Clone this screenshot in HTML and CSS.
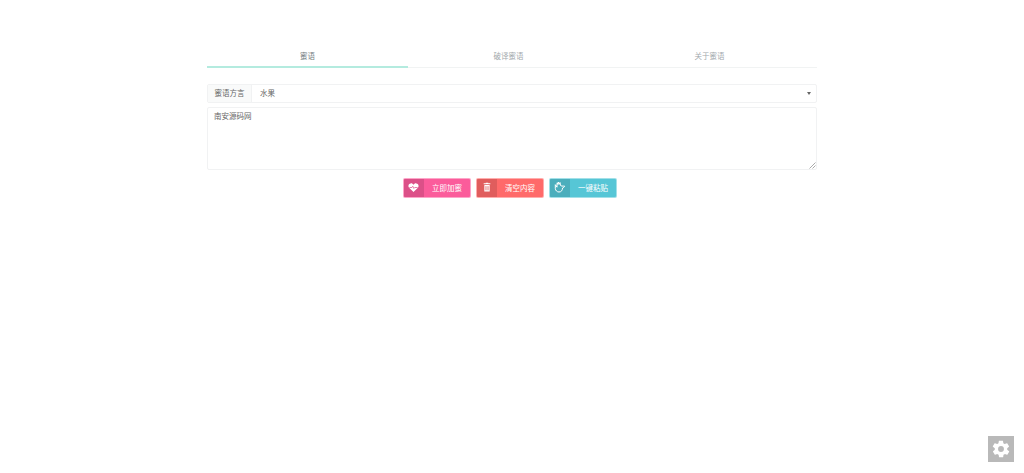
FILE: index.html
```html
<!DOCTYPE html>
<html lang="zh-CN">
<head>
<meta charset="utf-8">
<title>蜜语</title>
<link rel="stylesheet" href="styles.css">
</head>
<body>
<main class="wrap">
  <nav class="tabs">
    <a class="tab active">蜜语</a>
    <a class="tab">破译蜜语</a>
    <a class="tab">关于蜜语</a>
  </nav>
  <div class="group">
    <span class="addon">蜜语方言</span>
    <div class="select"><span>水果</span><i class="caret"></i></div>
  </div>
  <div class="textarea">南安源码网
    <svg class="grip" viewBox="0 0 7 7" width="7" height="7"><path d="M0.500 6.500 6.500 0.500M3.500 6.500 6.500 3.500" stroke="#aaa" stroke-width="1" fill="none"/></svg>
  </div>
  <div class="actions">
    <a class="btn pink"><span class="ico"><svg viewBox="0 0 12 12" width="11" height="11"><path d="M6 11 1.200 6.200C-.2 4.600.5 1.600 3 1.500 4.400 1.400 5.400 2.200 6 3c.6-.8 1.600-1.600 3-1.500 2.500.1 3.200 3.100 1.800 4.700Z" fill="#fff"/><path d="M1.500 6H4.300L5.200 4.600 6.400 7 7.300 6H10.500" stroke="#e0568e" stroke-width=".8" fill="none"/></svg></span><span class="lbl">立即加蜜</span></a>
    <a class="btn red"><span class="ico"><svg viewBox="0 0 12 12" width="10" height="10"><path d="M4.500 1.500V.8H7.500V1.500H10V2.800H2V1.500ZM2.800 3.500H9.200V11.300H2.800Z" fill="#fff"/><path d="M4.500 5V10M6 5V10M7.500 5V10" stroke="#de5f5f" stroke-width=".7"/></svg></span><span class="lbl">清空内容</span></a>
    <a class="btn cyan"><span class="ico"><svg viewBox="0 0 12 12" width="12" height="12"><path d="M1.300 3.700 3 6.200V3L3.200 1.800 4 3.500 4.300 1 5.300 3.300 6 1.500 6.500 4.500C7 5 8.700 5.300 10.500 5 10.800 6 9.500 6.700 8.500 7 8.500 9 7.500 11 5 11 3 11 1.500 9.500 1.300 7.500Z" fill="none" stroke="#fff" stroke-width="1" stroke-linejoin="round"/></svg></span><span class="lbl">一键粘贴</span></a>
  </div>
</main>
<button class="gear" type="button" aria-label="设置"><svg viewBox="0 0 24 24" width="20" height="20"><path fill="#fff" d="M19.400 13c.1-.3.100-.7.100-1s0-.7-.1-1l2.100-1.600c.2-.2.200-.4.100-.6l-2-3.500c-.1-.2-.4-.3-.6-.2l-2.500 1c-.5-.4-1.100-.7-1.700-1l-.4-2.600c0-.3-.2-.5-.5-.5h-4c-.3 0-.5.200-.5.500l-.4 2.600c-.6.300-1.200.6-1.700 1l-2.500-1c-.2-.1-.5 0-.6.200l-2 3.500c-.1.200-.1.400.1.600L4.600 11c-.1.300-.1.700-.1 1s0 .7.100 1l-2.100 1.600c-.2.200-.2.400-.1.600l2 3.500c.1.200.4.300.6.200l2.500-1c.5.400 1.100.7 1.700 1l.4 2.600c0 .3.200.5.500.5h4c.3 0 .5-.2.500-.5l.4-2.600c.6-.3 1.200-.6 1.700-1l2.500 1c.2.100.5 0 .6-.2l2-3.500c.1-.2.100-.4-.1-.6ZM12 15.500a3.500 3.500 0 1 1 0-7 3.500 3.500 0 0 1 0 7Z"/></svg></button>
</body>
</html>
```
FILE: styles.css
```css
* { box-sizing: border-box; }
html, body { margin: 0; height: 100%; }
body {
  background: #fff;
  color: #666;
  font-family: "Noto Sans CJK SC", "Liberation Sans", sans-serif;
  font-size: 7.5px;
  overflow: hidden;
}
.wrap {
  width: 610px;
  margin-left: 207px;
  padding-top: 47px;
}
.tabs {
  display: flex;
  height: 21px;
  border-bottom: 1px solid #f1f3f3;
}
.tab {
  width: 201px;
  height: 21px;
  line-height: 18px;
  text-align: center;
  color: #a3a9ad;
  border-bottom: 2px solid transparent;
}
.tab.active {
  color: #737c81;
  border-bottom-color: #b4ebdf;
}
.group {
  display: flex;
  height: 19px;
  margin-top: 16px;
  border: 1px solid #f1f2f3;
  border-radius: 2px;
}
.addon {
  width: 44px;
  flex: none;
  background: #f9fafa;
  border-right: 1px solid #f1f2f3;
  line-height: 15px;
  text-align: center;
}
.select {
  flex: 1;
  display: flex;
  align-items: center;
  justify-content: space-between;
  padding: 0 5px 2px 8px;
}
.caret {
  width: 0;
  height: 0;
  margin-top: 2px;
  border-left: 2px solid transparent;
  border-right: 2px solid transparent;
  border-top: 3px solid #666;
}
.textarea {
  position: relative;
  height: 63px;
  margin-top: 4px;
  padding: 2px 6px;
  border: 1px solid #f1f2f3;
  border-radius: 2px;
  line-height: 12px;
}
.grip { position: absolute; right: 0; bottom: 0; }
.actions {
  display: flex;
  justify-content: center;
  gap: 5px;
  margin-top: 8px;
  padding-right: 5px;
}
.btn {
  display: flex;
  width: 68px;
  height: 20px;
  border: 1px solid rgba(255,255,255,.45);
  border-radius: 2px;
  color: #fff;
  line-height: 17px;
}
.ico {
  width: 20px;
  flex: none;
  display: flex;
  align-items: center;
  justify-content: center;
  padding-bottom: 2px;
  background: rgba(0,0,0,.12);
}
.lbl { flex: 1; text-align: center; padding-left: 1px; }
.pink { background: #fb5c9b; }
.red { background: #ff6a6a; }
.cyan { background: #56c6d6; }
.gear {
  position: fixed;
  left: 988px;
  top: 436px;
  width: 26px;
  height: 26px;
  padding: 0;
  border: 0;
  background: #b9b9b9;
  display: flex;
  align-items: center;
  justify-content: center;
}
```
